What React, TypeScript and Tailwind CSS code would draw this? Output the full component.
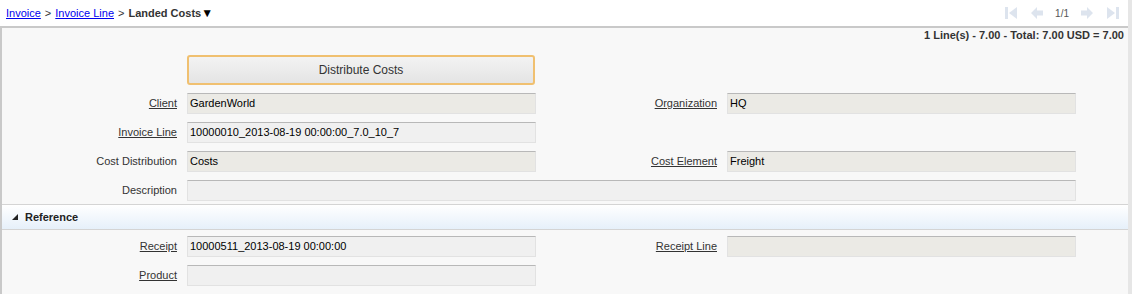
import React from "react"

const font = { fontFamily: '"Liberation Sans", Arial, sans-serif' }

type Field = { label: string; value?: string; link?: boolean; tone?: "beige" | "grey" }

function Label({ f, w }: { f: Field; w: string }) {
  return (
    <div className={`${w} shrink-0 text-right text-[11px] leading-none text-[#333]`}>
      {f.link ? <a className="underline text-[#333] cursor-pointer">{f.label}</a> : <span>{f.label}</span>}
    </div>
  )
}

function Input({ f, w }: { f: Field; w: string }) {
  const bg = f.tone === "beige" ? "bg-[#ebeae5]" : "bg-[#f0f0f0]"
  return (
    <div
      className={`${w} h-[21px] ${bg} border border-[#e2e2e2] border-t-[#b8b8b8] ml-[10px] flex items-center px-[2px] text-[11px] text-black`}
    >
      {f.value}
    </div>
  )
}

function Row({ left, right }: { left: Field; right?: Field }) {
  return (
    <div className="flex items-center h-[21px]">
      <Label f={left} w="w-[175px]" />
      <Input f={left} w="w-[349px]" />
      {right && (
        <>
          <Label f={right} w="w-[181px]" />
          <Input f={right} w="w-[349px]" />
        </>
      )}
    </div>
  )
}

function NavIcon({ kind }: { kind: "first" | "prev" | "next" | "last" }) {
  const c = "#dde4ee"
  return (
    <svg width="14" height="14" viewBox="0 0 14 14">
      {kind === "first" && (
        <>
          <rect x="1" y="1" width="3" height="12" fill={c} />
          <path d="M13 1 L5 7 L13 13 Z" fill={c} />
        </>
      )}
      {kind === "last" && (
        <>
          <rect x="10" y="1" width="3" height="12" fill={c} />
          <path d="M1 1 L9 7 L1 13 Z" fill={c} />
        </>
      )}
      {kind === "prev" && <path d="M1 7 L7 1 L7 4.5 L13 4.5 L13 9.5 L7 9.5 L7 13 Z" fill={c} />}
      {kind === "next" && <path d="M13 7 L7 1 L7 4.5 L1 4.5 L1 9.5 L7 9.5 L7 13 Z" fill={c} />}
    </svg>
  )
}

export default function App() {
  return (
    <div className="w-[1132px] h-[294px] overflow-hidden bg-[#f8f8f8] flex" style={font}>
      <div className="flex-1 flex flex-col">
        {/* header */}
        <div className="h-[28px] bg-white border-b-2 border-[#c9c9c9] flex items-center justify-between pl-[6px] pr-[6px]">
          <div className="flex items-center text-[11px] text-[#333]">
            <a className="text-[#0000ee] underline">Invoice</a>
            <span className="mx-[4px]">&gt;</span>
            <a className="text-[#0000ee] underline">Invoice Line</a>
            <span className="mx-[4px]">&gt;</span>
            <span className="font-bold">Landed Costs</span>
            <span className="text-[12px] leading-none text-black">▼</span>
          </div>
          <div className="flex items-center gap-[12px] pr-[2px]">
            <NavIcon kind="first" />
            <NavIcon kind="prev" />
            <span className="text-[10px] text-[#555] mx-[-1px]">1/1</span>
            <NavIcon kind="next" />
            <NavIcon kind="last" />
          </div>
        </div>
        <div className="flex-1 flex flex-col border-l-2 border-[#c9c9c9]">
          <div className="h-[15px] text-right text-[11px] font-bold text-[#333] pr-[4px] leading-[15px]">
            1 Line(s) - 7.00 - Total: 7.00 USD = 7.00
          </div>
          <div className="flex pt-[12px]">
            <div className="ml-[185px] w-[348px] h-[30px] rounded-[3px] border-2 border-[#f0c070] bg-gradient-to-b from-[#f3f3f3] to-[#e4e4e4] flex items-center justify-center text-[12px] text-[#333]">
              Distribute Costs
            </div>
          </div>
          <div className="flex flex-col gap-[8px] pt-[8px]">
            <Row
              left={{ label: "Client", value: "GardenWorld", link: true, tone: "beige" }}
              right={{ label: "Organization", value: "HQ", link: true, tone: "beige" }}
            />
            <Row left={{ label: "Invoice Line", value: "10000010_2013-08-19 00:00:00_7.0_10_7", link: true }} />
            <Row
              left={{ label: "Cost Distribution", value: "Costs", tone: "beige" }}
              right={{ label: "Cost Element", value: "Freight", link: true, tone: "beige" }}
            />
            <div className="flex items-center h-[21px]">
              <Label f={{ label: "Description" }} w="w-[175px]" />
              <Input f={{ label: "Description" }} w="w-[889px]" />
            </div>
          </div>
          <div className="mt-[3px] h-[26px] border-t border-b border-[#d4d4d4] bg-gradient-to-b from-white to-[#e6f0fa] flex items-center pl-[10px] text-[11px] font-bold text-[#222]">
            <svg width="6" height="6" viewBox="0 0 6 6" className="mr-[7px]">
              <path d="M6 0 L6 6 L0 6 Z" fill="#222" />
            </svg>
            Reference
          </div>
          <div className="flex flex-col gap-[8px] pt-[6px]">
            <Row
              left={{ label: "Receipt", value: "10000511_2013-08-19 00:00:00", link: true }}
              right={{ label: "Receipt Line", link: true, tone: "beige" }}
            />
            <Row left={{ label: "Product", link: true }} />
          </div>
        </div>
      </div>
      <div className="w-[4px] bg-[#e6e6e6]" />
    </div>
  )
}
